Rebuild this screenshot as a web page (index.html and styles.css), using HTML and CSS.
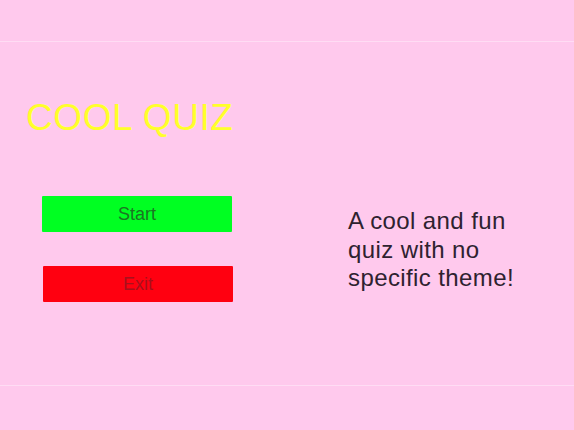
FILE: index.html
```html
<!DOCTYPE html>
<html lang="en">
<head>
<meta charset="utf-8">
<title>Cool Quiz</title>
<link rel="stylesheet" href="styles.css">
</head>
<body>
<div class="screen">
  <div class="band"></div>
  <main class="stage">
    <section class="menu">
      <h1 class="title">COOL QUIZ</h1>
      <div class="buttons">
        <button class="btn btn-start">Start</button>
        <button class="btn btn-exit">Exit</button>
      </div>
    </section>
    <p class="blurb">A cool and fun<br>quiz with no<br>specific theme!</p>
  </main>
  <div class="band"></div>
</div>
</body>
</html>
```
FILE: styles.css
```css
html, body {
  margin: 0;
  padding: 0;
}
body {
  background: #ffc9ed;
  font-family: "Liberation Sans", Arial, sans-serif;
}
.screen {
  width: 574px;
  height: 430px;
  display: flex;
  flex-direction: column;
}
.band {
  height: 41px;
  flex: none;
}
.stage {
  height: 343px;
  flex: none;
  display: flex;
  border-top: 1px solid #ffdcf4;
  border-bottom: 1px solid #ffdcf4;
}
.menu {
  width: 300px;
  padding-left: 26px;
  display: flex;
  flex-direction: column;
}
.title {
  margin: 57px 0 0 0;
  font-size: 37px;
  line-height: 37px;
  font-weight: normal;
  color: #ffff2a;
  letter-spacing: 0.6px;
}
.buttons {
  margin-top: 60px;
  margin-left: 16px;
  display: flex;
  flex-direction: column;
  gap: 34px;
}
.btn {
  width: 190px;
  height: 36px;
  border: none;
  border-radius: 1px;
  padding: 0;
  font-family: "Liberation Sans", Arial, sans-serif;
  font-size: 18px;
  cursor: pointer;
}
.btn-start {
  background: #00ff22;
  color: #1c7522;
}
.btn-exit {
  background: #ff0010;
  color: #a8101c;
  margin-left: 1px;
}
.blurb {
  margin: 165px 0 0 22px;
  font-size: 24px;
  line-height: 28.5px;
  letter-spacing: 0.4px;
  color: #2e2230;
}
```
